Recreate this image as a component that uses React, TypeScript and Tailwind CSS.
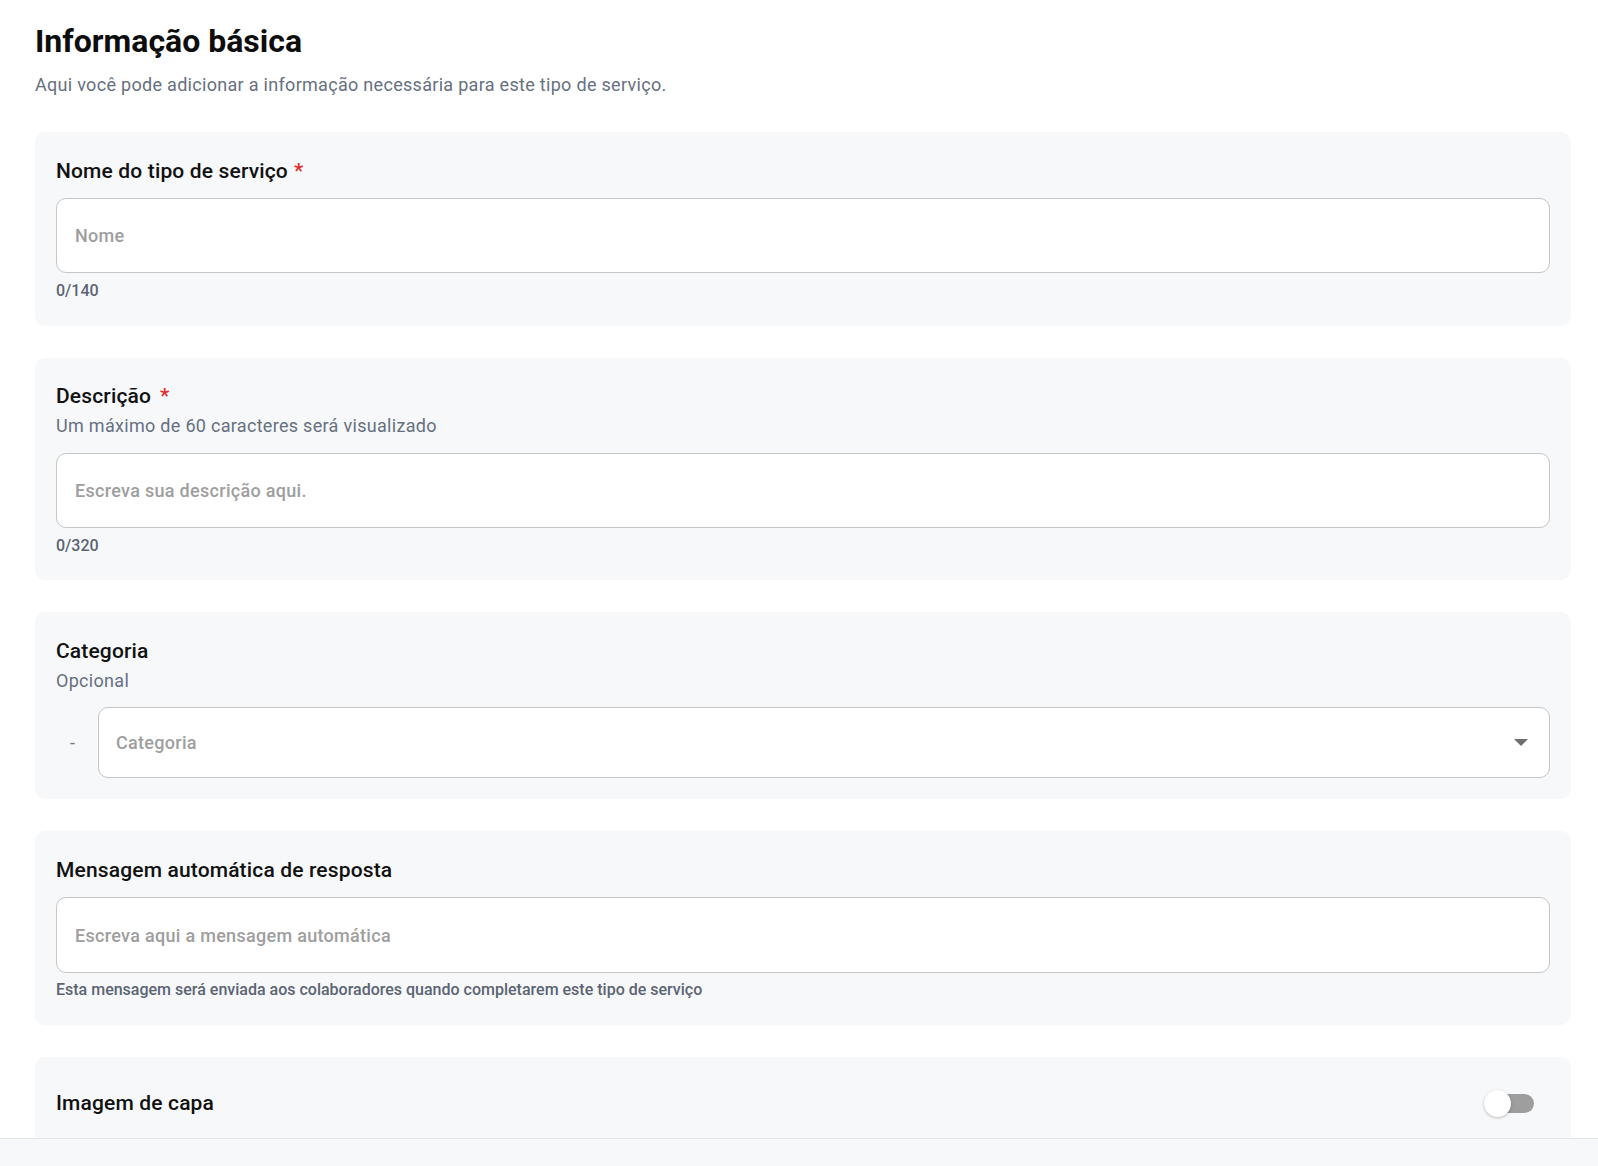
import { useState } from "react";

const FONT = "font-['Roboto','Liberation_Sans',sans-serif]";

function Label({ text, required, gap = "ml-[6px]" }: { text: string; required?: boolean; gap?: string }) {
  return (
    <div className="text-[21px] leading-[24px] font-medium tracking-[0.15px] text-[#111111]">
      {text}
      {required && <span className={`${gap} text-[#e02b2b]`}>*</span>}
    </div>
  );
}

function Hint({ text }: { text: string }) {
  return <div className="mt-[6px] text-[18px] leading-[24px] tracking-[0.3px] text-[#667080]">{text}</div>;
}

function Counter({ text, className = "mt-2" }: { text: string; className?: string }) {
  return <div className={`${className} text-[16px] leading-[20px] font-medium text-[#5b6472]`}>{text}</div>;
}

function Card({ children, className = "" }: { children: React.ReactNode; className?: string }) {
  return <section className={`rounded-[10px] bg-[#f7f8fa] px-[21px] ${className}`}>{children}</section>;
}

function TextBox({ placeholder, height }: { placeholder: string; height: string }) {
  const [value, setValue] = useState("");
  return (
    <input
      value={value}
      onChange={e => setValue(e.target.value)}
      placeholder={placeholder}
      className={`block w-full ${height} rounded-[10px] border border-[#c6c6c6] bg-white px-[18px] text-[18px] font-medium tracking-[0.3px] text-[#222] outline-none placeholder:text-[#9e9e9e]`}
    />
  );
}

function Toggle() {
  const [on, setOn] = useState(false);
  return (
    <button type="button" onClick={() => setOn(v => !v)} className="relative block h-[27px] w-[50px]">
      <span className={`absolute right-0 top-[4px] h-[19px] w-[40px] rounded-full ${on ? "bg-[#7fb3ef]" : "bg-[#9e9e9e]"}`} />
      <span
        className={`absolute top-0 h-[27px] w-[27px] rounded-full shadow-[0_1px_3px_rgba(0,0,0,0.25)] ${on ? "left-[23px] bg-[#1976d2]" : "left-0 bg-white"}`}
      />
    </button>
  );
}

export default function App() {
  return (
    <div className={`flex h-[1166px] flex-col overflow-hidden bg-white ${FONT}`}>
      <main className="flex-1 overflow-hidden pl-[35px] pr-[27px]">
        <h1 className="pt-[21px] text-[32px] leading-[40px] font-bold text-[#0d0d0d]">Informação básica</h1>
        <p className="mt-[12px] text-[18px] leading-[24px] tracking-[0.3px] text-[#667080]">
          Aqui você pode adicionar a informação necessária para este tipo de serviço.
        </p>

        <div className="mt-[35px] flex flex-col gap-[32px]">
          <Card className="pt-[27px] pb-[25px]">
            <Label text="Nome do tipo de serviço" required />
            <div className="mt-[15px]">
              <TextBox placeholder="Nome" height="h-[75px]" />
            </div>
            <Counter text="0/140" />
          </Card>

          <Card className="pt-[26px] pb-[24px]">
            <Label text="Descrição" required gap="ml-[9px]" />
            <Hint text="Um máximo de 60 caracteres será visualizado" />
            <div className="mt-[15px]">
              <TextBox placeholder="Escreva sua descrição aqui." height="h-[75px]" />
            </div>
            <Counter text="0/320" />
          </Card>

          <Card className="pt-[27px] pb-[21px]">
            <Label text="Categoria" />
            <Hint text="Opcional" />
            <div className="mt-[14px] flex items-center">
              <span className="ml-[14px] mr-[23px] text-[18px] text-[#777]">-</span>
              <button
                type="button"
                className="flex h-[71px] flex-1 items-center justify-between rounded-[10px] border border-[#c6c6c6] bg-white pl-[17px] pr-[21px] text-left"
              >
                <span className="text-[18px] font-medium tracking-[0.3px] text-[#9e9e9e]">Categoria</span>
                <svg width="14" height="7" viewBox="0 0 14 7">
                  <polygon points="0,0 14,0 7,7" fill="#6f6f6f" />
                </svg>
              </button>
            </div>
          </Card>

          <Card className="pt-[27px] pb-[25px]">
            <Label text="Mensagem automática de resposta" />
            <div className="mt-[15px]">
              <TextBox placeholder="Escreva aqui a mensagem automática" height="h-[76px]" />
            </div>
            <Counter text="Esta mensagem será enviada aos colaboradores quando completarem este tipo de serviço" className="mt-[7px]" />
          </Card>

          <Card className="pt-[34px] pb-[34px]">
            <div className="flex h-[24px] items-center justify-between">
              <div className="text-[21px] leading-[24px] font-medium tracking-[0.15px] text-[#111111]">Imagem de capa</div>
              <div className="mr-[16px] flex items-center">
                <Toggle />
              </div>
            </div>
          </Card>
        </div>
      </main>
      <footer className="h-[28px] shrink-0 border-t border-[#e3e5e8] bg-[#f7f8fa]" />
    </div>
  );
}
